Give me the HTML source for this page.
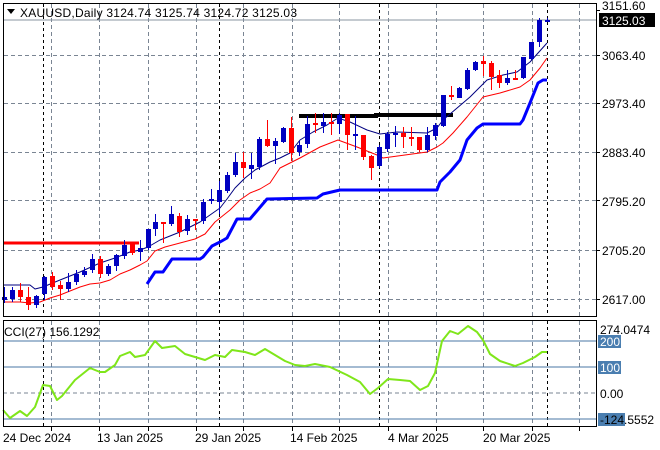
<!DOCTYPE html>
<html><head><meta charset="utf-8"><style>
html,body{margin:0;padding:0;background:#fff;}
svg{display:block;font-family:"Liberation Sans","DejaVu Sans",sans-serif;}
</style></head><body>
<svg id="s" width="660" height="450" viewBox="0 0 660 450" xmlns="http://www.w3.org/2000/svg">
<rect width="660" height="450" fill="#fff"/>
<g id="grid" stroke="#7a8593" stroke-dasharray="4,3" stroke-width="1" shape-rendering="crispEdges"></g>
<g id="vl" stroke="#000" stroke-dasharray="3,3" stroke-width="1" shape-rendering="crispEdges"></g>
<line x1="3" y1="20" x2="597" y2="20" stroke="#8894a0" stroke-width="1" shape-rendering="crispEdges"/>
<line x1="3" y1="243" x2="139" y2="243" stroke="#f00" stroke-width="3"/>
<polyline points="299,116 376,116 376,115 453,115" fill="none" stroke="#000" stroke-width="4"/>
<g id="lines"></g>
<g id="candles" shape-rendering="crispEdges"></g>
<g stroke="#4a77a4" stroke-width="1" shape-rendering="crispEdges">
<line x1="3" y1="341" x2="597" y2="341"/><line x1="3" y1="367" x2="597" y2="367"/><line x1="3" y1="419" x2="597" y2="419"/>
</g>
<line x1="3" y1="393" x2="597" y2="393" stroke="#7a8593" stroke-dasharray="4,3" shape-rendering="crispEdges"/>
<polyline id="cci" fill="none" stroke="#7fe61a" stroke-width="2" stroke-linejoin="round"/>
<g fill="none" stroke="#000" stroke-width="1" shape-rendering="crispEdges">
<rect x="3.5" y="3.5" width="593" height="313"/>
<rect x="3.5" y="320.5" width="593" height="106"/>
</g>
<g id="ticks" stroke="#000" shape-rendering="crispEdges"></g>
<path d="M7,9 L15,9 L11,14 Z" fill="#000"/>
<text x="20" y="17" font-size="12" fill="#000" textLength="277" lengthAdjust="spacing">XAUUSD,Daily  3124.74 3125.74 3124.72 3125.03</text>
<g font-size="12" fill="#000">
<text x="602" y="10">3151.60</text>
<text x="602" y="60">3063.40</text>
<text x="602" y="108">2973.40</text>
<text x="602" y="157">2883.40</text>
<text x="602" y="206">2795.20</text>
<text x="602" y="255">2705.20</text>
<text x="602" y="304">2617.00</text>
</g>
<rect x="599" y="13" width="56" height="14" fill="#000"/>
<text x="602" y="25" font-size="12" fill="#fff">3125.03</text>
<text x="4" y="336" font-size="12" fill="#000">CCI(27) 156.1292</text>
<g font-size="12">
<text x="600" y="334" fill="#000">274.0474</text>
<rect x="598" y="335" width="23" height="13" fill="#4a7eb0"/><text x="600" y="346" fill="#fff">200</text>
<rect x="598" y="361" width="23" height="13" fill="#4a7eb0"/><text x="600" y="372" fill="#fff">100</text>
<text x="600" y="398" fill="#000">0.00</text>
<rect x="598" y="413" width="27" height="13" fill="#4a7eb0"/><text x="600" y="424" fill="#000">-124.5552</text>
</g>
<g font-size="12" fill="#000">
<text x="3" y="442">24 Dec 2024</text>
<text x="97" y="442">13 Jan 2025</text>
<text x="195" y="442">29 Jan 2025</text>
<text x="290" y="442">14 Feb 2025</text>
<text x="388" y="442">4 Mar 2025</text>
<text x="483" y="442">20 Mar 2025</text>
</g>
</svg>
<script>
var NS="http://www.w3.org/2000/svg";
function el(p,t,a){var e=document.createElementNS(NS,t);for(var k in a)e.setAttribute(k,a[k]);p.appendChild(e);return e;}
var g=document.getElementById('grid');
[51,99,148,196,243,292,339,388,436,483,532,579].forEach(function(x){el(g,'line',{x1:x+.5,y1:4,x2:x+.5,y2:316});el(g,'line',{x1:x+.5,y1:321,x2:x+.5,y2:426});});
[55,103,152,200,250,299].forEach(function(y){el(g,'line',{x1:4,y1:y+.5,x2:596,y2:y+.5});});
var v=document.getElementById('vl');
[43,219,379,547].forEach(function(x){el(v,'line',{x1:x+.5,y1:4,x2:x+.5,y2:316});el(v,'line',{x1:x+.5,y1:321,x2:x+.5,y2:426});});
var tk=document.getElementById('ticks');
[51,99,148,196,243,292,339,388,436,483,532,579].forEach(function(x){el(tk,'line',{x1:x+.5,y1:427,x2:x+.5,y2:431});});
[10,55,103,152,200,250,299].forEach(function(y){el(tk,'line',{x1:597,y1:y+.5,x2:600,y2:y+.5});});
var L=document.getElementById('lines');
function pl(pts,c,w){el(L,'polyline',{points:pts.map(function(p){return p.join(',')}).join(' '),fill:'none',stroke:c,'stroke-width':w,'stroke-linejoin':'round'});}
pl([[3,285],[30,285],[35,289],[43,287],[60,280],[80,272],[100,263],[115,258],[130,252],[140,250],[148,247],[160,240],[180,232],[200,222],[210,215],[220,208],[227,199],[235,188],[245,178],[255,170],[270,162],[280,158],[290,153],[300,140],[313,132],[327,125],[338,118],[350,122],[367,130],[380,134],[397,132],[427,133],[437,128],[443,120],[470,97],[487,80],[503,75],[517,72],[530,62],[547,43]],'#000080',1);
pl([[3,302],[20,302],[30,303],[40,302],[50,298],[60,295],[70,291],[80,287],[90,284],[100,283],[110,280],[120,274],[130,270],[140,265],[147,261],[155,251],[165,247],[180,243],[195,239],[205,234],[215,222],[230,210],[240,200],[250,193],[260,189],[270,183],[280,168],[300,158],[320,147],[338,140],[357,147],[377,155],[383,158],[427,152],[437,147],[443,143],[453,133],[467,117],[483,97],[500,93],[520,87],[530,80],[540,68],[547,58]],'#f00',1);
pl([[147,284],[155,272],[163,272],[172,259],[200,259],[203,257],[212,246],[220,242],[227,238],[237,219],[250,219],[267,199],[317,198],[323,194],[340,190],[437,190],[440,182],[450,172],[460,160],[467,140],[477,128],[483,124],[520,124],[523,120],[530,103],[538,83],[543,80],[547,80]],'#0000ff',3);
var C=[[4,297,300,287,303,'b'],[11.5,290,299,287,302,'b'],[19.5,290,297,283,302,'r'],[27.5,297,305,287,310,'r'],[35.5,296,305,295,308,'b'],[43.5,277,294,276,300,'b'],[51.5,276,287,272,290,'r'],[59.5,285,289,281,300,'r'],[67.5,282,289,273,292,'b'],[75.5,274,282,270,285,'b'],[83.5,271,275,267,277,'b'],[91.5,259,270,254,273,'b'],[99.5,259,274,256,278,'r'],[107.5,266,274,264,276,'b'],[115.5,255,266,254,271,'b'],[123.5,245,256,240,259,'b'],[131.5,244,253,244,255,'r'],[139.5,248,252,240,261,'b'],[147.5,229,248,229,250,'b'],
[155,222,229,214,236,'b'],[163,222,224,222,243,'r'],[171,214,224,206,226,'b'],[179,216,232,213,237,'r'],[187,219,231,215,235,'b'],[195,219,221,219,230,'r'],[203,202,221,199,224,'b'],[211,199,201,189,204,'b'],[219,190,202,181,214,'b'],[227,175,191,172,193,'b'],[235,162,175,153,177,'b'],[243,162,168,152,178,'r'],[251,165,169,153,179,'b'],[259,139,167,137,170,'b'],[267,139,146,120,147,'r'],[275,141,146,138,164,'b'],[283,128,142,127,143,'b'],
[291,128,153,117,161,'r'],[299,145,152,141,156,'b'],[307,124,144,116,148,'b'],[315,123,124,113,133,'r'],[323,122,126,113,133,'b'],[331,122,124,113,135,'r'],[339,115,124,113,134,'b'],[347,114,135,114,150,'r'],[355,134,135,116,150,'b'],[363,135,157,135,160,'r'],[371,156,168,155,180,'r'],[379,147,166,145,168,'b'],[387,134,149,132,152,'b'],[395,133,134,126,147,'b'],[403,133,137,127,148,'r'],[411,137,138,127,146,'r'],[419,137,150,137,152,'r'],[427,135,150,127,152,'b'],[435,125,136,123,140,'b'],
[443,95,126,95,127,'b'],[451,95,97,86,100,'r'],[459,88,98,87,98,'b'],[467,70,89,68,90,'b'],[475,62,70,61,71,'b'],[483,61,64,56,76,'r'],[491,63,77,61,90,'r'],[499,75,83,70,88,'r'],[507,78,83,70,85,'b'],[515,78,79,70,80,'r'],[523,57,78,57,79,'b'],[531,42,59,42,60,'b'],[539,20,42,18,47,'b'],[547,20,21,18,22,'b']];
var cg=document.getElementById('candles');
C.forEach(function(c){var col=c[5]=='b'?'#0000c0':'#f00';var x=Math.round(c[0]);
el(cg,'rect',{x:x,y:c[3],width:1,height:c[4]-c[3],fill:col});
var h=Math.max(2,c[2]-c[1]);el(cg,'rect',{x:x-2,y:c[1],width:5,height:h,fill:col});});
var cci=[[3,410],[10,418],[20,411],[27,416],[35,407],[43,385],[50,386],[57,400],[62,396],[75,380],[90,368],[100,372],[105,372],[115,365],[120,356],[130,352],[135,357],[145,355],[155,341],[162,348],[175,346],[185,354],[195,357],[205,360],[215,355],[225,357],[232,350],[245,352],[255,355],[265,349],[275,355],[285,361],[295,365],[305,366],[315,364],[330,367],[347,375],[360,382],[370,394],[378,388],[388,379],[400,380],[410,381],[420,390],[428,386],[435,373],[442,341],[450,331],[458,334],[468,326],[477,332],[483,340],[490,354],[500,361],[515,366],[523,363],[535,357],[542,352],[547,352]];
document.getElementById('cci').setAttribute('points',cci.map(function(p){return p.join(',')}).join(' '));
</script>
</body></html>
